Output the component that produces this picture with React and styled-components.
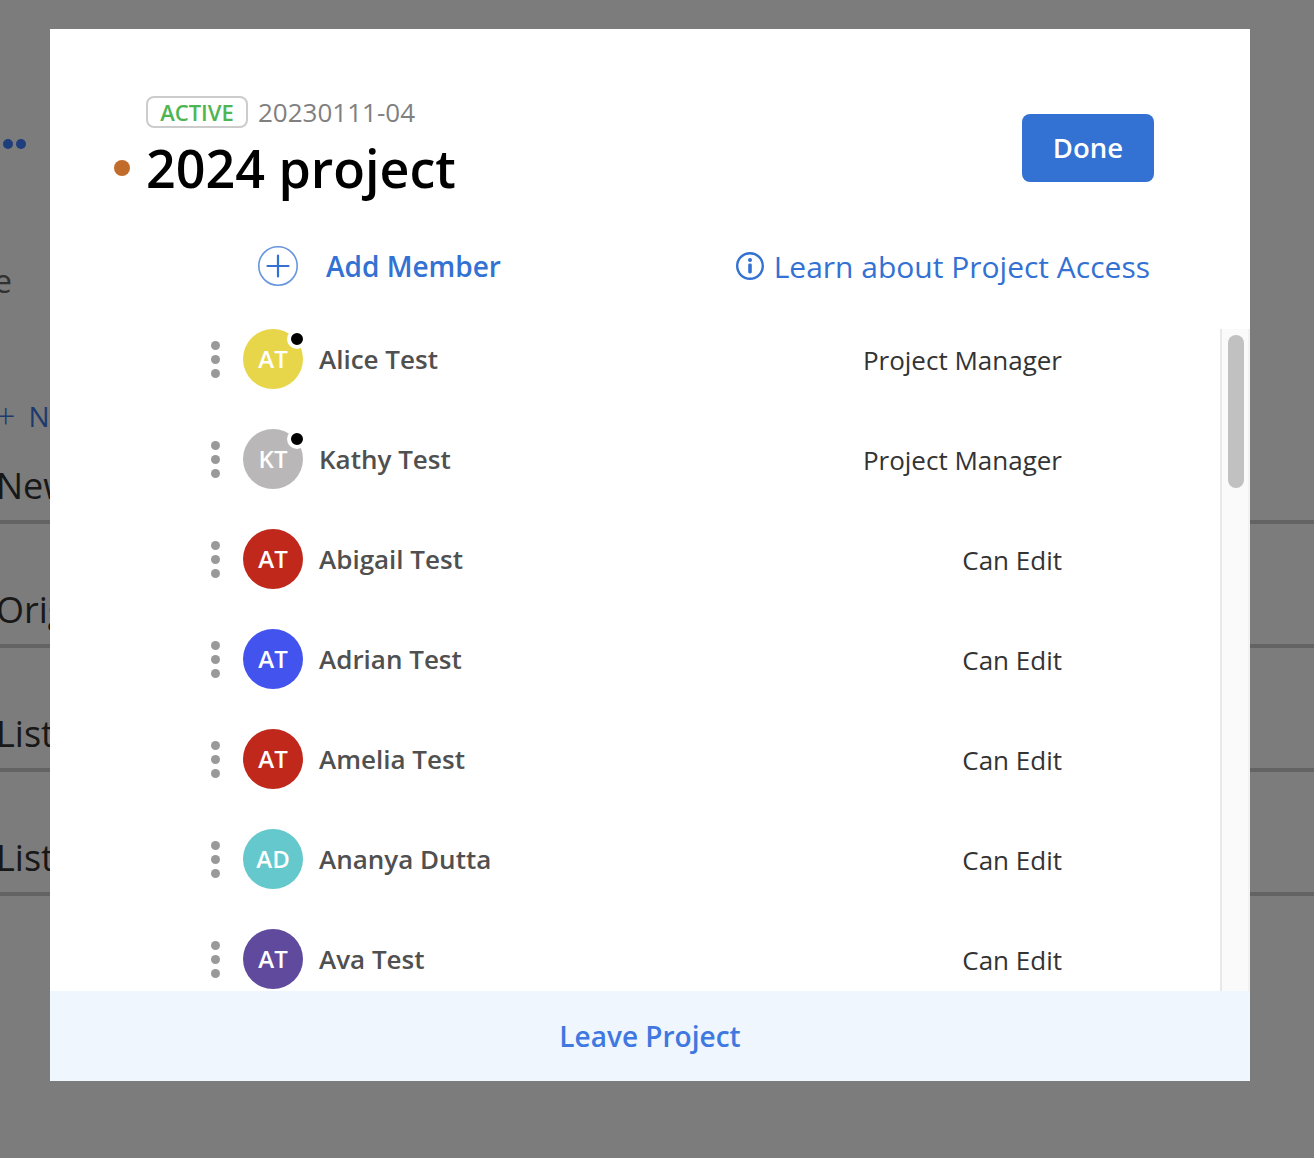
import React from 'react';
import styled, { createGlobalStyle } from 'styled-components';

const GlobalStyle = createGlobalStyle`
  html, body {
    margin: 0;
    padding: 0;
    background: #fff;
    font-family: 'Open Sans', 'Liberation Sans', sans-serif;
  }
`;

const Page = styled.div`
  position: relative;
  width: 1314px;
  height: 1158px;
  overflow: hidden;
`;

const Backdrop = styled.div`
  height: 100%;
  padding-top: 136px;
  box-sizing: border-box;
`;

const MoreDots = styled.div`
  display: flex;
  gap: 3px;
  padding-left: 3px;
  height: 16px;
  align-items: center;

  span {
    width: 10px;
    height: 10px;
    border-radius: 50%;
    background: #3f7fff;
  }
`;

const PageNote = styled.div`
  margin: 107px 0 0 -6px;
  font-size: 32px;
  line-height: 44px;
  color: #666;
`;

const NewLink = styled.div`
  margin: 93px 0 0 -4px;
  display: flex;
  gap: 13px;
  align-items: center;
  height: 40px;
  font-size: 28px;
  color: #3f78e0;
`;

const NewPlus = styled.span`
  font-size: 34px;
  font-weight: 300;
`;

const BackRow = styled.div`
  height: ${(p) => (p.$first ? '88px' : '124px')};
  box-sizing: border-box;
  border-bottom: 4px solid #ccc;
  display: flex;
  align-items: flex-end;
  padding-bottom: 7px;
  font-size: 36px;
  line-height: 54px;
  color: #333;
  margin-left: -4px;
`;

const Overlay = styled.div`
  position: absolute;
  inset: 0;
  background: rgba(0, 0, 0, 0.515);
`;

const Modal = styled.div`
  position: absolute;
  left: 50px;
  top: 29px;
  width: 1200px;
  height: 1052px;
  background: #fff;
  display: flex;
  flex-direction: column;
  overflow: hidden;
`;

const Header = styled.header`
  height: 300px;
  flex: none;
  box-sizing: border-box;
  padding: 65px 96px 0 64px;
  display: flex;
  flex-direction: column;
`;

const TitleRow = styled.div`
  display: flex;
  justify-content: space-between;
  align-items: flex-start;
`;

const TitleBlock = styled.div`
  display: flex;
  flex-direction: column;
`;

const MetaRow = styled.div`
  display: flex;
  align-items: center;
  gap: 10px;
  margin-left: 32px;
`;

const StatusBadge = styled.span`
  box-sizing: border-box;
  width: 102px;
  height: 32px;
  border: 2px solid #ccc;
  border-radius: 8px;
  display: flex;
  align-items: center;
  justify-content: center;
  font-size: 22px;
  font-weight: 600;
  color: #4fb553;
`;

const ProjectCode = styled.span`
  font-size: 26px;
  color: #808080;
`;

const TitleLine = styled.div`
  display: flex;
  align-items: center;
  gap: 16px;
  margin-top: 4px;
`;

const ColorDot = styled.span`
  width: 16px;
  height: 16px;
  border-radius: 50%;
  background: #c26c2b;
`;

const Title = styled.h1`
  margin: 0;
  font-size: 52px;
  line-height: 68px;
  font-weight: 600;
  color: #000;
`;

const DoneButton = styled.button`
  width: 132px;
  height: 68px;
  margin-top: 20px;
  padding: 0 0 2px;
  border: 0;
  border-radius: 8px;
  background: #3371d3;
  color: #fff;
  font: 600 27.5px 'Open Sans', sans-serif;
`;

const ActionRow = styled.div`
  display: flex;
  justify-content: space-between;
  align-items: center;
  margin-top: 42px;
  height: 44px;
  padding-left: 144px;
  padding-right: 4px;
`;

const AddMember = styled.a`
  display: flex;
  align-items: center;
  gap: 28px;
  font-size: 28px;
  font-weight: 600;
  color: #3371d3;
`;

const LearnLink = styled.a`
  display: flex;
  align-items: center;
  gap: 9px;
  font-size: 30px;
  color: #3371d3;
`;

const Body = styled.div`
  flex: 1;
  min-height: 0;
  display: flex;
`;

const MemberList = styled.div`
  flex: 1;
  overflow: hidden;
  padding: 0 158px 0 160px;
`;

const MemberRow = styled.div`
  height: 100px;
  display: flex;
  align-items: flex-start;
`;

const RowMenu = styled.div`
  width: 33px;
  height: 60px;
  display: flex;
  flex-direction: column;
  justify-content: center;
  gap: 5px;
  align-items: flex-start;

  span {
    width: 9px;
    height: 9px;
    margin-left: 1px;
    border-radius: 50%;
    background: #999;
  }
`;

const Avatar = styled.div`
  position: relative;
  width: 60px;
  height: 60px;
  box-sizing: border-box;
  padding-bottom: 2px;
  flex: none;
  border-radius: 50%;
  background: ${(p) => p.$color};
  color: #fff;
  display: flex;
  align-items: center;
  justify-content: center;
  font-size: 24px;
  font-weight: 600;
`;

const OwnerBadge = styled.span`
  position: absolute;
  right: -4px;
  top: 0;
  width: 12px;
  height: 12px;
  border: 4px solid #fff;
  border-radius: 50%;
  background: #000;
`;

const MemberName = styled.div`
  flex: 1;
  margin-left: 16px;
  height: 60px;
  line-height: 60px;
  font-size: 26px;
  font-weight: 600;
  color: #505050;
`;

const MemberRole = styled.div`
  height: 62px;
  line-height: 62px;
  font-size: 26px;
  color: #333;
`;

const ScrollTrack = styled.div`
  width: 30px;
  flex: none;
  box-sizing: border-box;
  background: #fafafa;
  border-left: 2px solid #e8e8e8;
  border-right: 2px solid #f2f2f2;
  padding: 6px 4px 0 6px;
`;

const ScrollThumb = styled.div`
  width: 16px;
  height: 153px;
  border-radius: 8px;
  background: #c1c1c1;
`;

const Footer = styled.a`
  height: 90px;
  flex: none;
  background: #eff6fe;
  display: flex;
  align-items: center;
  justify-content: center;
  font-size: 28px;
  font-weight: 600;
  color: #3f78e0;
`;

const PlusIcon = () => (
  <svg width="40" height="40" viewBox="0 0 40 40" fill="none" stroke="#3371d3">
    <circle cx="20" cy="20" r="19.2" strokeWidth="1.6" opacity="0.75" />
    <path d="M9.5 20h21M20 9.5v21" strokeWidth="2.2" strokeLinecap="round" />
  </svg>
);

const InfoIcon = () => (
  <svg width="30" height="30" viewBox="0 0 30 30" fill="none">
    <circle cx="15" cy="15" r="12.8" stroke="#3371d3" strokeWidth="2.4" />
    <circle cx="15" cy="9" r="2" fill="#3371d3" />
    <rect x="13.2" y="12.5" width="3.6" height="10" rx="1.4" fill="#3371d3" />
  </svg>
);

const members = [
  { initials: 'AT', name: 'Alice Test', role: 'Project Manager', color: '#e8d64a', owner: true },
  { initials: 'KT', name: 'Kathy Test', role: 'Project Manager', color: '#b9b7b8', owner: true },
  { initials: 'AT', name: 'Abigail Test', role: 'Can Edit', color: '#c0281c' },
  { initials: 'AT', name: 'Adrian Test', role: 'Can Edit', color: '#4253ee' },
  { initials: 'AT', name: 'Amelia Test', role: 'Can Edit', color: '#c0281c' },
  { initials: 'AD', name: 'Ananya Dutta', role: 'Can Edit', color: '#64c8cc' },
  { initials: 'AT', name: 'Ava Test', role: 'Can Edit', color: '#604a9e' },
];

const App = () => (
  <Page>
    <GlobalStyle />
    <Backdrop>
      <MoreDots>
        <span />
        <span />
      </MoreDots>
      <PageNote>e</PageNote>
      <NewLink>
        <NewPlus>+</NewPlus>
        <span>New</span>
      </NewLink>
      <BackRow $first>New</BackRow>
      <BackRow>Original</BackRow>
      <BackRow>List</BackRow>
      <BackRow>List</BackRow>
    </Backdrop>
    <Overlay />
    <Modal>
      <Header>
        <TitleRow>
          <TitleBlock>
            <MetaRow>
              <StatusBadge>ACTIVE</StatusBadge>
              <ProjectCode>20230111-04</ProjectCode>
            </MetaRow>
            <TitleLine>
              <ColorDot />
              <Title>2024 project</Title>
            </TitleLine>
          </TitleBlock>
          <DoneButton>Done</DoneButton>
        </TitleRow>
        <ActionRow>
          <AddMember>
            <PlusIcon />
            Add Member
          </AddMember>
          <LearnLink>
            <InfoIcon />
            Learn about Project Access
          </LearnLink>
        </ActionRow>
      </Header>
      <Body>
        <MemberList>
          {members.map((m) => (
            <MemberRow key={m.name}>
              <RowMenu>
                <span />
                <span />
                <span />
              </RowMenu>
              <Avatar $color={m.color}>
                {m.initials}
                {m.owner && <OwnerBadge />}
              </Avatar>
              <MemberName>{m.name}</MemberName>
              <MemberRole>{m.role}</MemberRole>
            </MemberRow>
          ))}
        </MemberList>
        <ScrollTrack>
          <ScrollThumb />
        </ScrollTrack>
      </Body>
      <Footer>Leave Project</Footer>
    </Modal>
  </Page>
);

export default App;
